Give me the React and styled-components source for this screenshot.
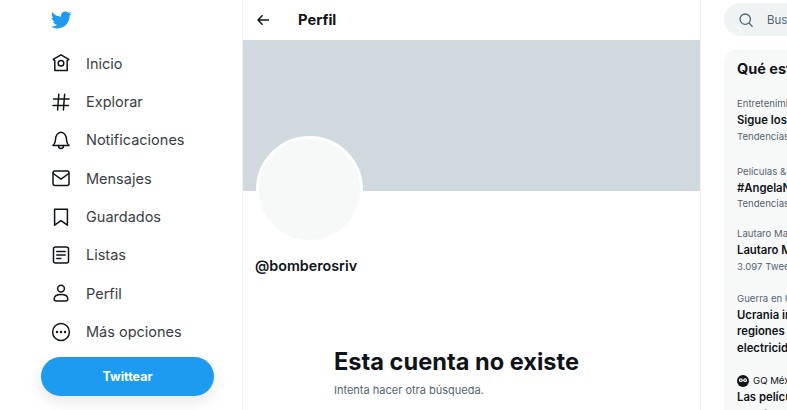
import React from "react";
import styled, { createGlobalStyle } from "styled-components";

const GlobalStyle = createGlobalStyle`
  html, body {
    margin: 0;
    padding: 0;
    background: #fff;
    overflow: hidden;
  }
  body {
    font-family: Inter, "Liberation Sans", sans-serif;
    color: #0f1419;
  }
`;

const Page = styled.div`
  display: grid;
  grid-template-columns: 243px 458px 1fr;
  width: 787px;
  height: 410px;
  overflow: hidden;
`;

const Sidebar = styled.aside`
  display: flex;
  flex-direction: column;
  padding: 9px 0 0 41px;
  border-right: 1px solid #eff3f4;
  box-sizing: border-box;
`;

const Logo = styled.svg`
  width: 22px;
  height: 22px;
  margin: 0 0 13px 9px;
  fill: #1d9bf0;
`;

const Nav = styled.nav`
  display: flex;
  flex-direction: column;
`;

const NavItem = styled.a`
  display: flex;
  align-items: center;
  gap: 15px;
  height: 38.35px;
  padding-left: 10px;
  font-size: 14.5px;
  color: #383e44;
`;

const NavIcon = styled.svg`
  width: 20px;
  height: 20px;
  flex: none;
  fill: none;
  stroke: #0f1419;
  stroke-width: 1.5;
  stroke-linecap: round;
  stroke-linejoin: round;
`;

const TweetButton = styled.button`
  width: 173px;
  height: 39px;
  margin-top: 6px;
  border: 0;
  border-radius: 20px;
  background: #1d9bf0;
  box-shadow: 0 6px 14px rgba(15, 20, 25, 0.1);
  color: #fff;
  font: 700 12.5px Inter, "Liberation Sans", sans-serif;
`;

const Main = styled.main`
  display: flex;
  flex-direction: column;
  border-right: 1px solid #eff3f4;
  box-sizing: border-box;
`;

const Header = styled.header`
  display: flex;
  align-items: center;
  gap: 29px;
  height: 40px;
  padding-left: 14px;
`;

const BackIcon = styled.svg`
  width: 12px;
  height: 12px;
  fill: none;
  stroke: #0f1419;
  stroke-width: 1.5;
`;

const HeaderTitle = styled.h2`
  margin: 0;
  font-size: 14.7px;
  font-weight: 700;
`;

const Banner = styled.div`
  height: 151px;
  background: #cfd9de;
`;

const Avatar = styled.div`
  width: 107px;
  height: 107px;
  margin: -55px 0 0 13px;
  border: 3px solid #fff;
  border-radius: 50%;
  background: #f7f9f9;
  box-sizing: border-box;
`;

const Handle = styled.div`
  margin: 14px 0 0 12px;
  font-size: 14.3px;
  font-weight: 600;
  line-height: 18px;
`;

const Empty = styled.section`
  margin: 72px 0 0 91px;
`;

const EmptyTitle = styled.h1`
  margin: 0;
  font-size: 23.6px;
  font-weight: 700;
  line-height: 30px;
`;

const EmptyText = styled.p`
  margin: 6px 0 0;
  font-size: 11px;
  line-height: 15px;
  color: #536471;
`;

const Aside = styled.aside`
  display: flex;
  flex-direction: column;
  width: 290px;
  padding: 3px 0 0 23px;
`;

const Search = styled.div`
  display: flex;
  align-items: center;
  gap: 14px;
  height: 33px;
  padding-left: 15px;
  border-radius: 17px 0 0 17px;
  background: #eff3f4;
  font-size: 11.5px;
  color: #536471;
`;

const SearchIcon = styled.svg`
  width: 14px;
  height: 14px;
  fill: none;
  stroke: #536471;
  stroke-width: 1.3;
  stroke-linecap: round;
`;

const Card = styled.section`
  margin-top: 14px;
  padding: 10px 0 0 13px;
  border-radius: 12px 0 0 0;
  background: #f7f9f9;
  height: 360px;
`;

const CardTitle = styled.h3`
  margin: 0 0 18px;
  font-size: 14.5px;
  font-weight: 700;
  line-height: 18px;
`;

const Trend = styled.article`
  margin-bottom: ${(p) => p.$gap}px;
`;

const TrendMeta = styled.div`
  display: flex;
  align-items: center;
  gap: 4px;
  font-size: 9.6px;
  line-height: 16px;
  color: ${(p) => (p.$source ? "#0f1419" : "#536471")};
  white-space: nowrap;
`;

const TrendName = styled.div`
  font-size: 11.3px;
  font-weight: 600;
  line-height: 16.5px;
  white-space: nowrap;
`;

const SourceIcon = styled.svg`
  width: 12px;
  height: 12px;
  flex: none;
`;

const navItems = [
  {
    label: "Inicio",
    icon: (
      <>
        <path d="M10 1.8 2.2 6.4l1.6 1.2v10h12.4V7.6l1.6-1.2z" />
        <circle cx="10" cy="10.2" r="2.8" />
      </>
    ),
  },
  {
    label: "Explorar",
    icon: <path d="M2.5 7h15.5M2 13.5h15.5M7.8 2.2 6.6 18M13.6 2.2 12.4 18" />,
  },
  {
    label: "Notificaciones",
    icon: (
      <>
        <path d="M2 15.5c1.8-1.6 2.4-3 2.5-5.8C4.6 5.6 6.8 2.2 10 2.2s5.4 3.4 5.5 7.5c.1 2.8.7 4.2 2.5 5.8z" />
        <path d="M7.5 15.5c0 1.8 1.1 3 2.5 3s2.5-1.2 2.5-3" />
      </>
    ),
  },
  {
    label: "Mensajes",
    icon: (
      <>
        <rect x="2" y="3" width="16" height="14.5" rx="2" />
        <path d="m2.2 5.5 7.8 5.6 7.8-5.6" />
      </>
    ),
  },
  {
    label: "Guardados",
    icon: <path d="M3.6 2.2h12.8v16L10 13.6l-6.4 4.6z" />,
  },
  {
    label: "Listas",
    icon: (
      <>
        <rect x="2.5" y="2" width="15" height="16" rx="2" />
        <path d="M5.8 6.4h8.4M5.8 10h8.4M5.8 13.6h4" />
      </>
    ),
  },
  {
    label: "Perfil",
    icon: (
      <>
        <circle cx="10" cy="5.6" r="3.4" />
        <path d="M3.2 16c0-3 3-4.4 6.8-4.4s6.8 1.4 6.8 4.4c0 1.4-1 2-2.2 2H5.4c-1.2 0-2.2-.6-2.2-2z" />
      </>
    ),
  },
  {
    label: "Más opciones",
    icon: (
      <>
        <circle cx="10" cy="10" r="8.4" />
        <circle cx="6" cy="10" r=".5" fill="#0f1419" />
        <circle cx="10" cy="10" r=".5" fill="#0f1419" />
        <circle cx="14" cy="10" r=".5" fill="#0f1419" />
      </>
    ),
  },
];

const trends = [
  { meta: "Entretenimiento · Tendencia", name: ["Sigue los Premios Oscar"], foot: "Tendencias de hoy", gap: 19 },
  { meta: "Películas & series · Tendencia", name: ["#AngelaNoEstaSola"], foot: "Tendencias de hoy", gap: 14 },
  { meta: "Lautaro Martínez · Tendencia", name: ["Lautaro Martínez"], foot: "3.097 Tweets", gap: 16 },
  {
    meta: "Guerra en Ucrania · En directo",
    name: ["Ucrania informa de cortes en", "regiones del este sin", "electricidad"],
    gap: 17,
  },
  { meta: "GQ México", source: true, name: ["Las películas más esperadas", "cuentan"], gap: 0 },
];

const App = () => {
  return (
    <Page>
      <GlobalStyle />
      <Sidebar>
        <Logo viewBox="0 0 24 24">
          <path d="M23.643 4.937c-.835.37-1.732.62-2.675.733.962-.576 1.7-1.49 2.048-2.578-.9.534-1.897.922-2.958 1.13-.85-.904-2.06-1.47-3.4-1.47-2.572 0-4.658 2.086-4.658 4.66 0 .364.042.718.12 1.06-3.873-.195-7.304-2.05-9.602-4.868-.4.69-.63 1.49-.63 2.342 0 1.616.823 3.043 2.072 3.878-.764-.025-1.482-.234-2.11-.583v.06c0 2.257 1.605 4.14 3.737 4.568-.392.106-.803.162-1.227.162-.3 0-.593-.028-.877-.082.593 1.85 2.313 3.198 4.352 3.234-1.595 1.25-3.604 1.995-5.786 1.995-.376 0-.747-.022-1.112-.065 2.062 1.323 4.51 2.093 7.14 2.093 8.57 0 13.255-7.098 13.255-13.254 0-.2-.005-.402-.014-.602.91-.658 1.7-1.477 2.323-2.41z" />
        </Logo>
        <Nav>
          {navItems.map((item) => (
            <NavItem key={item.label}>
              <NavIcon viewBox="0 0 20 20">{item.icon}</NavIcon>
              {item.label}
            </NavItem>
          ))}
        </Nav>
        <TweetButton>Twittear</TweetButton>
      </Sidebar>
      <Main>
        <Header>
          <BackIcon viewBox="0 0 12 12">
            <path d="M12 6H1M5.6 1.2 1 6l4.6 4.8" />
          </BackIcon>
          <HeaderTitle>Perfil</HeaderTitle>
        </Header>
        <Banner />
        <Avatar />
        <Handle>@bomberosriv</Handle>
        <Empty>
          <EmptyTitle>Esta cuenta no existe</EmptyTitle>
          <EmptyText>Intenta hacer otra búsqueda.</EmptyText>
        </Empty>
      </Main>
      <Aside>
        <Search>
          <SearchIcon viewBox="0 0 14 14">
            <circle cx="6.2" cy="6.2" r="5.2" />
            <path d="m10 10 3.2 3.4" />
          </SearchIcon>
          Buscar en Twitter
        </Search>
        <Card>
          <CardTitle>Qué está pasando</CardTitle>
          {trends.map((t) => (
            <Trend key={t.meta} $gap={t.gap}>
              <TrendMeta $source={t.source}>
                {t.source && (
                  <SourceIcon viewBox="0 0 12 12">
                    <circle cx="6" cy="6" r="6" fill="#0f1419" />
                    <circle cx="3.9" cy="5.2" r="1.9" fill="#fff" />
                    <circle cx="8.1" cy="5.2" r="1.9" fill="#fff" />
                    <circle cx="3.9" cy="5.2" r=".8" fill="#0f1419" />
                    <circle cx="8.1" cy="5.2" r=".8" fill="#0f1419" />
                  </SourceIcon>
                )}
                {t.meta}
              </TrendMeta>
              {t.name.map((line) => (
                <TrendName key={line}>{line}</TrendName>
              ))}
              {t.foot && <TrendMeta>{t.foot}</TrendMeta>}
            </Trend>
          ))}
        </Card>
      </Aside>
    </Page>
  );
};

export default App;
